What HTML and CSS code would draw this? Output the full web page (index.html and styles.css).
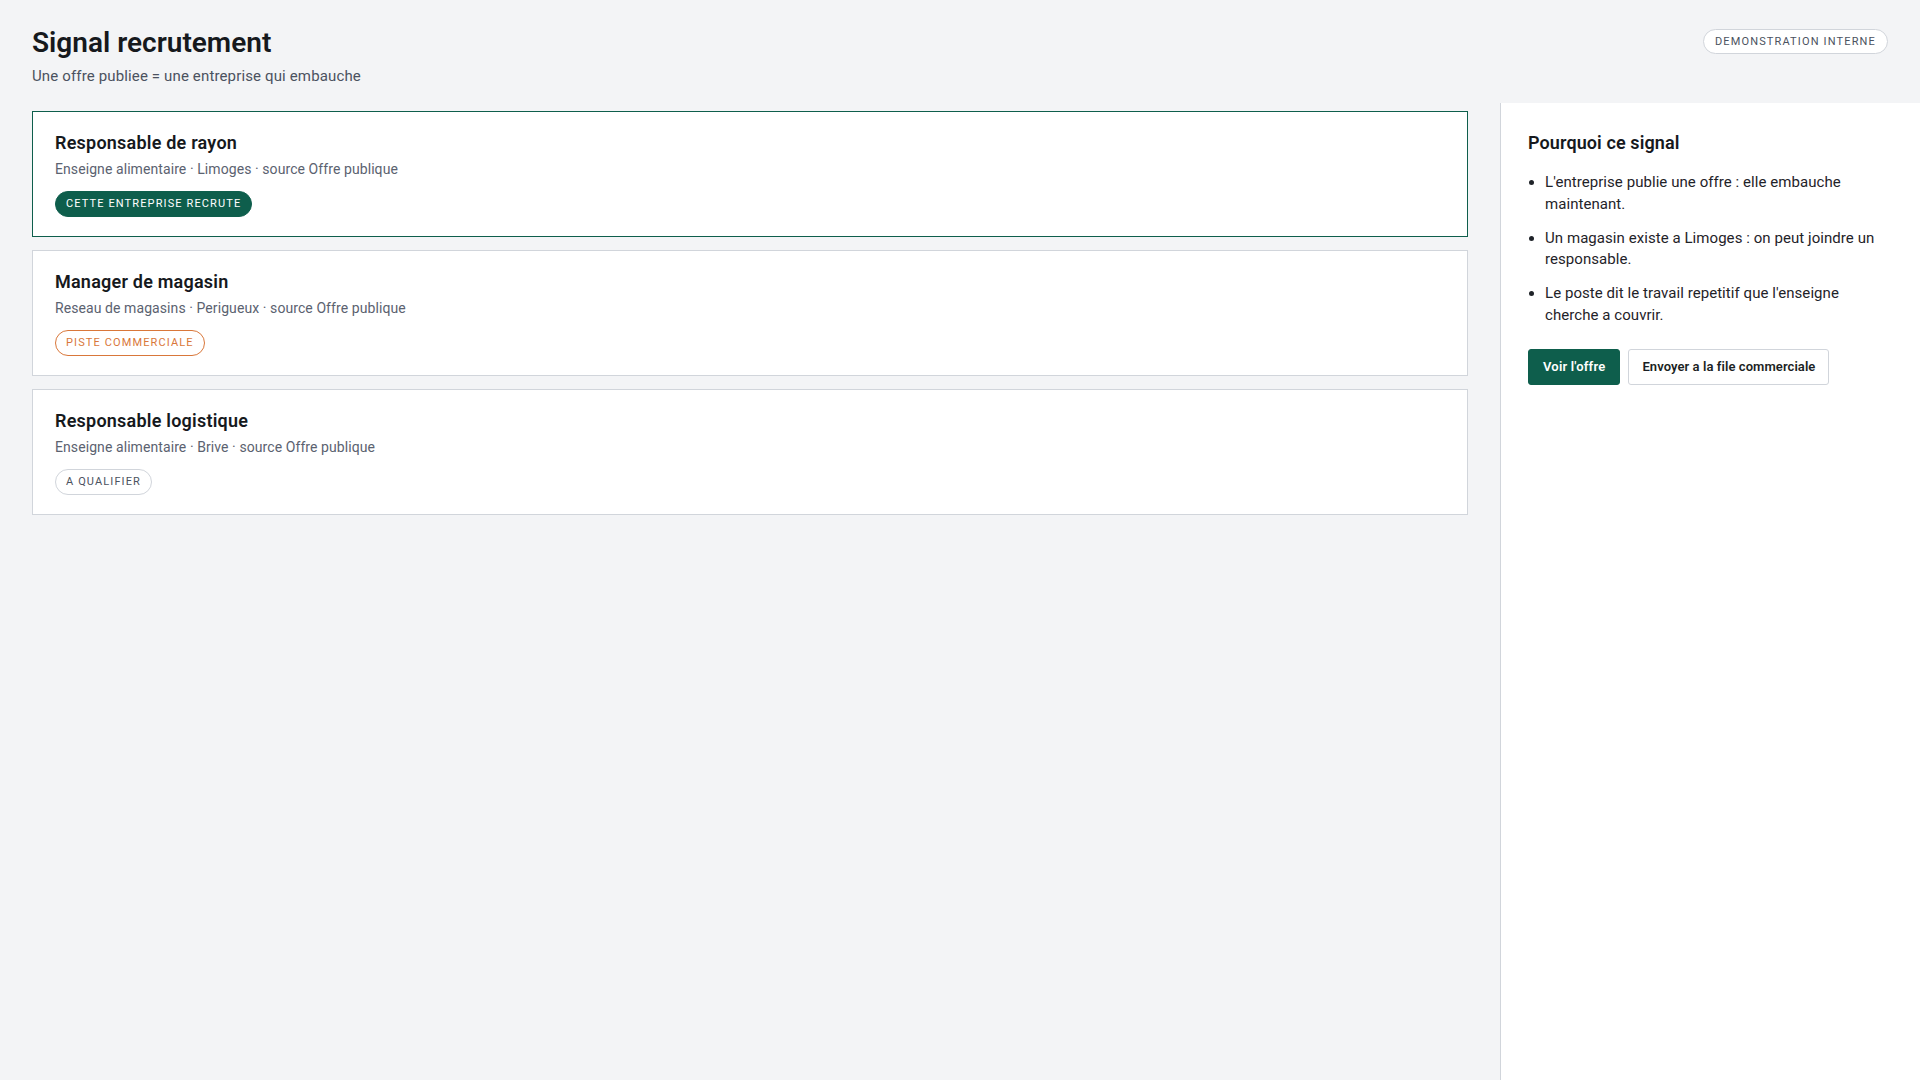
FILE: index.html
```html
<!DOCTYPE html>
<html lang="fr">
<head>
<meta charset="utf-8">
<title>Signal recrutement</title>
<link rel="stylesheet" href="styles.css">
</head>
<body>
<div class="app">
  <header class="header">
    <div class="header-text">
      <h1 class="title">Signal recrutement</h1>
      <p class="subtitle">Une offre publiee = une entreprise qui embauche</p>
    </div>
    <span class="badge">DEMONSTRATION INTERNE</span>
  </header>

  <main class="main">
    <article class="card card-active">
      <h2 class="card-title">Responsable de rayon</h2>
      <p class="card-meta">Enseigne alimentaire · Limoges · source Offre publique</p>
      <span class="pill pill-green">CETTE ENTREPRISE RECRUTE</span>
    </article>
    <article class="card">
      <h2 class="card-title">Manager de magasin</h2>
      <p class="card-meta">Reseau de magasins · Perigueux · source Offre publique</p>
      <span class="pill pill-orange">PISTE COMMERCIALE</span>
    </article>
    <article class="card">
      <h2 class="card-title">Responsable logistique</h2>
      <p class="card-meta">Enseigne alimentaire · Brive · source Offre publique</p>
      <span class="pill pill-gray">A QUALIFIER</span>
    </article>
  </main>

  <aside class="aside">
    <h2 class="aside-title">Pourquoi ce signal</h2>
    <ul class="reasons">
      <li>L'entreprise publie une offre : elle embauche maintenant.</li>
      <li>Un magasin existe a Limoges : on peut joindre un responsable.</li>
      <li>Le poste dit le travail repetitif que l'enseigne cherche a couvrir.</li>
    </ul>
    <div class="actions">
      <button class="btn btn-primary">Voir l'offre</button>
      <button class="btn btn-secondary">Envoyer a la file commerciale</button>
    </div>
  </aside>
</div>
</body>
</html>
```
FILE: styles.css
```css
* { box-sizing: border-box; }
html, body { margin: 0; padding: 0; }
body {
  background: #f3f4f6;
  color: #1b1f24;
  font-family: Roboto, "Noto Sans", sans-serif;
}
.app {
  display: grid;
  grid-template-columns: 1fr 420px;
  grid-template-rows: auto 1fr;
  min-height: 100vh;
}
.header {
  grid-column: 1 / -1;
  display: flex;
  justify-content: space-between;
  align-items: flex-start;
  padding: 25px 32px 16px 32px;
}
.title {
  margin: 0;
  font-size: 28px;
  line-height: 36px;
  font-weight: 600;
  color: #16191d;
}
.subtitle {
  margin: 4px 0 0;
  font-size: 15px;
  line-height: 22px;
  letter-spacing: 0.14px;
  color: #4b5260;
}
.badge {
  margin-top: 4px;
  height: 25px;
  line-height: 23px;
  padding: 0 11px;
  border: 1px solid #d1d5db;
  border-radius: 13px;
  background: #fff;
  font-size: 11px;
  letter-spacing: 1.15px;
  color: #4b5260;
}
.main {
  padding: 8px 32px 32px 32px;
  display: flex;
  flex-direction: column;
  gap: 13px;
}
.card {
  background: #fff;
  border: 1px solid #d1d5db;
  padding: 19px 22px 19px;
}
.card-active { border-color: #0e5e4c; }
.card-title {
  margin: 0 0 4px;
  font-size: 18px;
  line-height: 24px;
  font-weight: 600;
  letter-spacing: 0.22px;
  color: #16191d;
}
.card-meta {
  margin: 0 0 12px;
  font-size: 14px;
  line-height: 20px;
  letter-spacing: 0.08px;
  color: #5b6270;
}
.pill {
  display: inline-block;
  height: 26px;
  line-height: 24px;
  padding: 0 10px;
  border: 1px solid #d1d5db;
  border-radius: 13px;
  font-size: 11px;
  letter-spacing: 1.12px;
  color: #4b5260;
  background: #fff;
}
.pill-green { background: #0e5e4c; border-color: #0e5e4c; color: #fff; }
.pill-orange { border-color: #d9773a; color: #d9773a; }
.aside {
  background: #fff;
  border-left: 1px solid #d1d5db;
  padding: 28px 28px 28px 27px;
}
.aside-title {
  margin: 0 0 17px;
  font-size: 18px;
  line-height: 24px;
  font-weight: 600;
  letter-spacing: 0.1px;
  color: #16191d;
}
.reasons {
  margin: 0 0 22px;
  padding-left: 17px;
  font-size: 15px;
  line-height: 21.75px;
  letter-spacing: 0.06px;
  color: #1f2329;
}
.reasons li + li { margin-top: 12px; }
.actions {
  display: flex;
  gap: 8px;
}
.btn {
  height: 36px;
  padding: 0 14px;
  border-radius: 3px;
  font-family: inherit;
  font-size: 13px;
  font-weight: 600;
  letter-spacing: 0.2px;
  cursor: pointer;
}
.btn-primary {
  background: #0e5e4c;
  border: 1px solid #0e5e4c;
  color: #fff;
}
.btn-secondary {
  background: #fff;
  border: 1px solid #d1d5db;
  color: #1b1f24;
  padding: 0 13px;
  letter-spacing: 0.08px;
}
```
